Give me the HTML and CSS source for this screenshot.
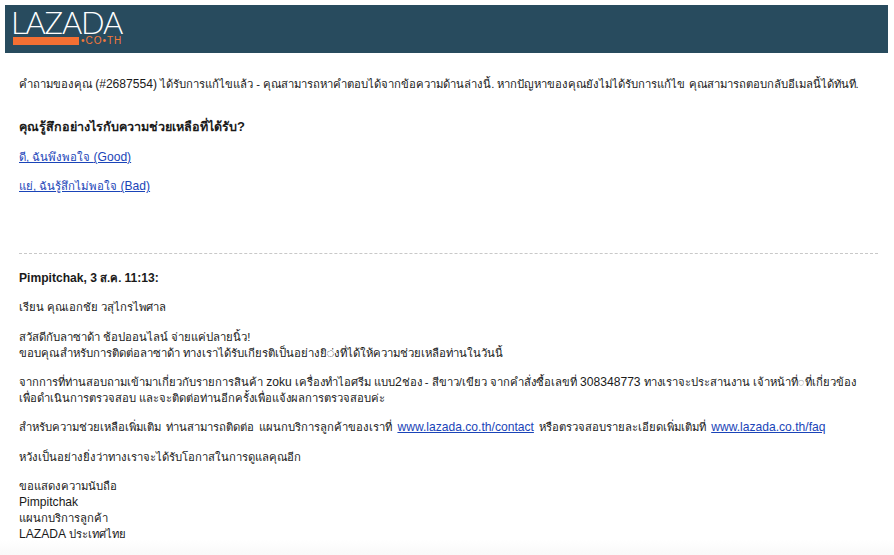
FILE: index.html
```html
<!DOCTYPE html>
<html lang="th">
<head>
<meta charset="utf-8">
<title>LAZADA</title>
<link rel="stylesheet" href="styles.css">
</head>
<body>
<header class="banner">
  <div class="logo">
    <div class="logo-name">LAZADA</div>
    <div class="logo-sub"><span class="logo-bar"></span><span class="logo-domain">•CO•TH</span></div>
  </div>
</header>
<main class="content">
  <p class="intro">คำถามของคุณ <span class="latin">(#2687554)</span> ได้รับการแก้ไขแล้ว - คุณสามารถหาคำตอบได้จากข้อความด้านล่างนี้. หากปัญหาของคุณยังไม่ได้รับการแก้ไข คุณสามารถตอบกลับอีเมลนี้ได้ทันที.</p>
  <h2 class="question">คุณรู้สึกอย่างไรกับความช่วยเหลือที่ได้รับ<span class="latin">?</span></h2>
  <p class="vote"><a href="#">ดี, ฉันพึงพอใจ <span class="latin">(Good)</span></a></p>
  <p class="vote"><a href="#">แย่, ฉันรู้สึกไม่พอใจ <span class="latin">(Bad)</span></a></p>
  <hr class="divider">
  <p class="author"><span class="latin">Pimpitchak, 3</span> ส.ค. <span class="latin">11:13:</span></p>
  <p class="para">เรียน คุณเอกชัย วสุไกรไพศาล</p>
  <p class="para para-wide">สวัสดีกับลาซาด้า ช้อปออนไลน์ จ่ายแค่ปลายนิ้ว!<br>ขอบคุณสำหรับการติดต่อลาซาด้า ทางเราได้รับเกียรติเป็นอย่างยิ◌่งที่ได้ให้ความช่วยเหลือท่านในวันนี้</p>
  <p class="para para-narrow">จากการที่ท่านสอบถามเข้ามาเกี่ยวกับรายการสินค้า <span class="latin">zoku</span> เครื่องทำไอศรีม แบบ<span class="latin">2</span>ช่อง - สีขาว/เขียว จากคำสั่งซื้อเลขที่ <span class="latin">308348773</span> ทางเราจะประสานงาน เจ้าหน้าที่◌ที่เกี่ยวข้อง<br>เพื่อดำเนินการตรวจสอบ และจะติดต่อท่านอีกครั้งเพื่อแจ้งผลการตรวจสอบค่ะ</p>
  <p class="para para-spaced">สำหรับความช่วยเหลือเพิ่มเติม ท่านสามารถติดต่อ แผนกบริการลูกค้าของเราที่ <a href="#" class="latin">www.lazada.co.th/contact</a> หรือตรวจสอบรายละเอียดเพิ่มเติมที่ <a href="#" class="latin">www.lazada.co.th/faq</a></p>
  <p class="para">หวังเป็นอย่างยิ่งว่าทางเราจะได้รับโอกาสในการดูแลคุณอีก</p>
  <p class="para">ขอแสดงความนับถือ<br><span class="latin">Pimpitchak</span><br>แผนกบริการลูกค้า<br><span class="latin">LAZADA</span> ประเทศไทย</p>
</main>
</body>
</html>
```
FILE: styles.css
```css
html, body { margin: 0; padding: 0; }
body {
  height: 555px;
  overflow: hidden;
  box-sizing: border-box;
  padding: 5px 6px 0 5px;
  background: linear-gradient(#fff 540px, #f9f9f9 555px);
  font-family: "Liberation Sans", "Noto Sans", "DejaVu Sans", sans-serif;
  font-size: 11.3px;
  line-height: 16.2px;
  color: #1a1a1a;
}
.latin { font-size: 12.1px; }
.banner {
  height: 48px;
  background: #284b5e;
  padding: 5px 8px 0;
  box-sizing: border-box;
}
.logo { width: 112px; }
.logo-name {
  font-family: Lato, sans-serif;
  font-weight: 300;
  font-size: 31px;
  line-height: 24px;
  color: #fff;
  letter-spacing: -1.2px;
  margin-left: -2px;
}
.logo-sub { display: flex; align-items: center; margin-top: 3px; gap: 2px; }
.logo-bar { flex: none; width: 66px; height: 8px; background: #f26f33; }
.logo-domain {
  font-size: 10px;
  line-height: 8px;
  color: #f5793a;
  letter-spacing: 1px;
  white-space: nowrap;
}
.content { padding: 23px 10px 0 14px; }
.intro { margin: 0 0 27px; white-space: nowrap; }
.question { margin: 0 0 14px; font-size: 12.55px; line-height: 16px; font-weight: bold; }
.question .latin { font-size: 13px; }
.vote { margin: 0 0 13px; font-size: 11.4px; }
a { color: #1a44b8; text-decoration: underline; }
.divider { border: 0; border-top: 1px dashed #c8c8c8; margin: 58px 0 16px; }
.author { margin: 0 0 13.5px; font-weight: bold; }
.para { margin: 0 0 13px; white-space: nowrap; }
.para-wide { font-size: 11.37px; }
.para-narrow { font-size: 11.25px; }
.para-spaced { word-spacing: 2px; }
```
